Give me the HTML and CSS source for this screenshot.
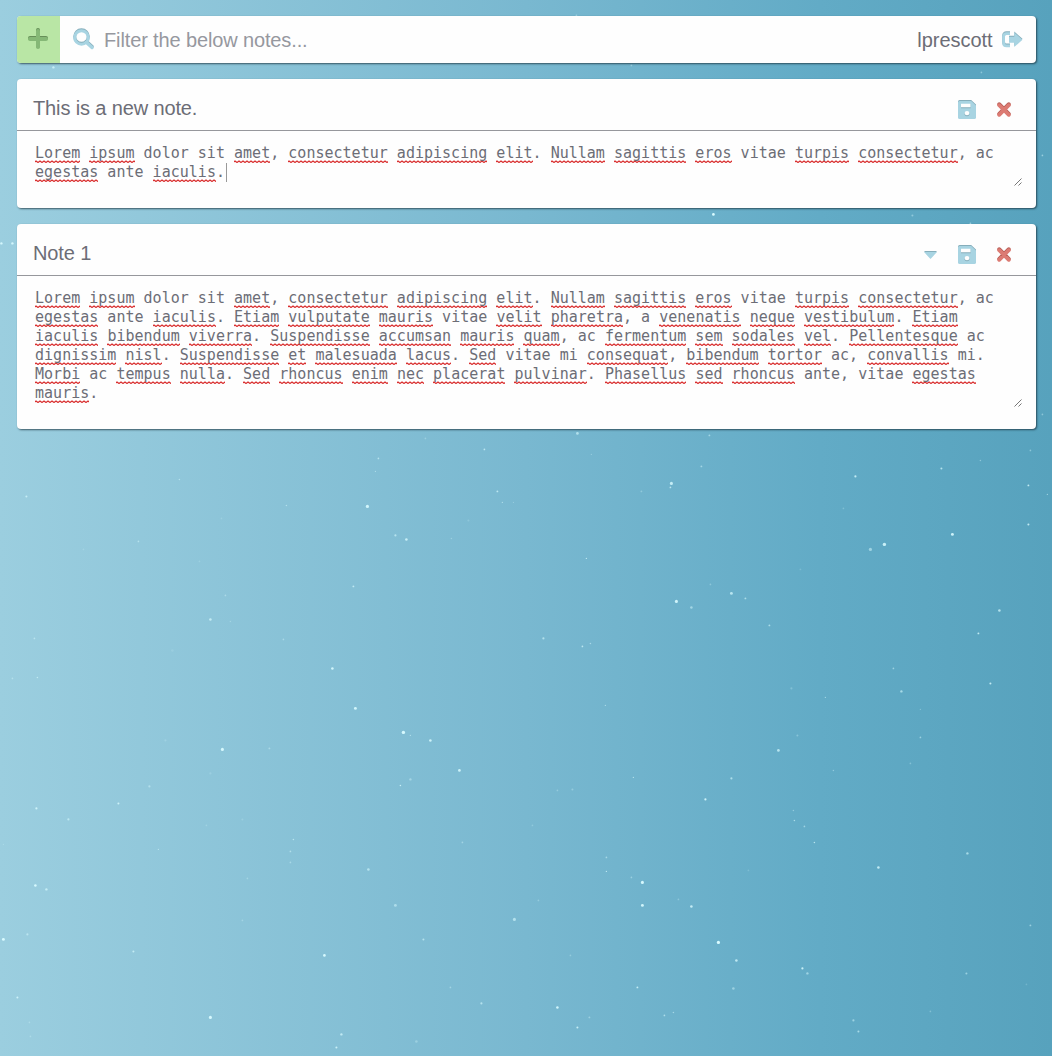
FILE: index.html
```html
<!DOCTYPE html>
<html lang="en">
<head>
<meta charset="utf-8">
<title>Notes</title>
<link rel="stylesheet" href="styles.css">
</head>
<body>
<svg class="stars" id="stars" width="1052" height="1056" aria-hidden="true"></svg>
<svg class="defs" width="0" height="0" aria-hidden="true">
  <symbol id="save" viewBox="0 0 18 18"><path fill-rule="evenodd" d="M1.6 0H13.2L18 4.6V16.4Q18 18 16.4 18H1.6Q0 18 0 16.4V1.6Q0 0 1.6 0ZM3 2.8V7.2H12.7V2.8ZM9 10A2.6 2.6 0 1 0 9 15.2A2.6 2.6 0 1 0 9 10Z"/></symbol>
  <symbol id="close" viewBox="0 0 14 14"><path d="M2.2 2.2L11.8 11.8M11.8 2.2L2.2 11.8" fill="none" stroke="currentColor" stroke-width="3.8" stroke-linecap="round"/></symbol>
</svg>
<main class="app">
  <header class="bar">
    <button class="add" aria-label="Add note"><svg width="20" height="20" viewBox="0 0 20 20"><path d="M10 2V18M2 10H18" fill="none" stroke="currentColor" stroke-width="4" stroke-linecap="round"/></svg></button>
    <svg class="search icon" width="21" height="21" viewBox="0 0 21 21"><circle cx="8.5" cy="8.5" r="6.8" fill="none" stroke="currentColor" stroke-width="3"/><path d="M13.5 13.5L19 18.5" stroke="currentColor" stroke-width="3.4" stroke-linecap="round"/></svg>
    <span class="filter">Filter the below notes...</span>
    <span class="user">lprescott</span>
    <svg class="logout icon" width="21" height="16" viewBox="0 0 21 16"><path d="M8 1.7H4.5Q1.6 1.7 1.6 4.6V11Q1.6 13.9 4.5 13.9H8" fill="none" stroke="currentColor" stroke-width="2.8"/><path d="M7 4.8H12.3V.6L20.5 7.8L12.3 15V10.8H7Z"/></svg>
  </header>

  <section class="note">
    <div class="head">
      <span class="title">This is a new note.</span>
      <svg class="icon" width="18" height="18"><use href="#save"/></svg>
      <svg class="icon close" width="14" height="14"><use href="#close"/></svg>
    </div>
    <div class="body short"><div class="text"><u>Lorem</u> <u>ipsum</u> dolor sit <u>amet</u>, <u>consectetur</u> <u>adipiscing</u> <u>elit</u>. <u>Nullam</u> <u>sagittis</u> <u>eros</u> vitae <u>turpis</u> <u>consectetur</u>, ac
<u>egestas</u> ante <u>iaculis</u>.<span class="caret"></span></div>
      <svg class="grip" width="8" height="8" viewBox="0 0 8 8"><path d="M.5 7.5L7.5 .5M4.5 7.5L7.5 4.5"/></svg>
    </div>
  </section>

  <section class="note">
    <div class="head">
      <span class="title">Note 1</span>
      <svg class="icon down" width="13" height="7" viewBox="0 0 13 7"><path d="M0 0H13L6.5 7Z"/></svg>
      <svg class="icon" width="18" height="18"><use href="#save"/></svg>
      <svg class="icon close" width="14" height="14"><use href="#close"/></svg>
    </div>
    <div class="body long"><div class="text"><u>Lorem</u> <u>ipsum</u> dolor sit <u>amet</u>, <u>consectetur</u> <u>adipiscing</u> <u>elit</u>. <u>Nullam</u> <u>sagittis</u> <u>eros</u> vitae <u>turpis</u> <u>consectetur</u>, ac
<u>egestas</u> ante <u>iaculis</u>. <u>Etiam</u> <u>vulputate</u> <u>mauris</u> vitae <u>velit</u> <u>pharetra</u>, a <u>venenatis</u> <u>neque</u> <u>vestibulum</u>. <u>Etiam</u>
<u>iaculis</u> <u>bibendum</u> <u>viverra</u>. <u>Suspendisse</u> <u>accumsan</u> <u>mauris</u> <u>quam</u>, ac <u>fermentum</u> <u>sem</u> <u>sodales</u> <u>vel</u>. <u>Pellentesque</u> ac
<u>dignissim</u> <u>nisl</u>. <u>Suspendisse</u> <u>et</u> <u>malesuada</u> <u>lacus</u>. <u>Sed</u> vitae mi <u>consequat</u>, <u>bibendum</u> <u>tortor</u> ac, <u>convallis</u> mi.
<u>Morbi</u> ac <u>tempus</u> <u>nulla</u>. <u>Sed</u> <u>rhoncus</u> <u>enim</u> <u>nec</u> <u>placerat</u> <u>pulvinar</u>. <u>Phasellus</u> <u>sed</u> <u>rhoncus</u> ante, vitae <u>egestas</u>
<u>mauris</u>.</div>
      <svg class="grip" width="8" height="8" viewBox="0 0 8 8"><path d="M.5 7.5L7.5 .5M4.5 7.5L7.5 4.5"/></svg>
    </div>
  </section>
</main>
<script src="stars.js"></script>
</body>
</html>
```
FILE: styles.css
```css
* { box-sizing: border-box; }

body {
  margin: 0;
  min-height: 1056px;
  overflow: hidden;
  font-family: "Liberation Sans", Arial, sans-serif;
  font-size: 20px;
  color: #6c6d76;
  background: linear-gradient(to right, #9bcedf 0%, #79b8d0 50%, #62abc6 78%, #57a2bd 100%);
}

.stars { position: absolute; inset: 0; }
.stars circle { fill: #d9fbff; }
.defs { position: absolute; }

.app {
  position: relative;
  display: flex;
  flex-direction: column;
  gap: 16px;
  padding: 16px 16.5px 0;
}

.bar, .note {
  background: #fefefe;
  border-radius: 4px;
  box-shadow: 1px 1px 2px rgba(20, 40, 50, .7);
}

.bar {
  display: flex;
  align-items: center;
  height: 46.5px;
  margin-bottom: .5px;
  padding-right: 13px;
}

.add {
  width: 43.5px;
  height: 46.5px;
  padding: 0;
  border: 0;
  border-radius: 4px 0 0 4px;
  background: #b9e6a5;
  color: #85b876;
  display: grid;
  place-items: center;
}

.icon { fill: currentColor; color: #a8d4e2; filter: drop-shadow(0 -.5px 0 #86aebb); }
.add svg { filter: drop-shadow(0 -.5px 0 #668f58); }
.search { margin: 1px 0 0 13px; }
.filter { flex: 1; margin-left: 10px; padding-top: 2px; color: #96989f; letter-spacing: -.13px; }
.user { padding-top: 2px; margin-right: 9px; letter-spacing: -.05px; }
.logout { margin-top: 1px; }

.head {
  display: flex;
  align-items: center;
  height: 52px;
  padding: 11px 24.5px 0 16.5px;
  border-bottom: 1px solid #96979c;
}

.title { flex: 1; padding-bottom: 4px; letter-spacing: -.13px; }
.down { margin-right: 20.5px; }
.close { margin-left: 21.5px; color: #dc7b73; filter: drop-shadow(0 -.5px 0 #b55b54); }

.body {
  display: flex;
  align-items: flex-end;
  justify-content: space-between;
  padding: 13px 13.5px 21.5px 18.5px;
}

.short { height: 76.5px; margin-bottom: .5px; }
.long { height: 152.5px; }

.text {
  align-self: flex-start;
  white-space: pre;
  font: 15px/19px "DejaVu Sans Mono", "Liberation Mono", monospace;
  letter-spacing: .014px;
}

.text u {
  text-decoration: none;
  padding-bottom: 1px;
  background: url("data:image/svg+xml,%3Csvg xmlns='http://www.w3.org/2000/svg' width='4' height='3'%3E%3Cpath d='M-1 2.5L1 1L3 2.5L5 1' fill='none' stroke='%23d92f2f' stroke-width='1.25'/%3E%3C/svg%3E") 0 100% repeat-x;
}

.caret { display: inline-block; width: 1px; height: 19px; margin-left: 1px; vertical-align: top; background: #999; }
.grip { stroke: #777; stroke-width: 1; fill: none; flex: none; }
```
FILE: stars.js
```js
// Each star is x, y, radius, opacity.
const stars = [
  [53,67,1.4,.7],[713,214,1.6,1],[1,243,1.4,.9],[12,243,1.4,.9],[576,15,1,.4],[631,65,1,.4],[981,72,1,.4],[1042,155,1,.5],[912,215,1.2,.4],[970,223,1,.5],[1042,414,1,.4],
  [26,496,1.2,.7],[179,479,.9,.5],[286,505,.9,.5],[138,541,1,.5],[83,549,1,.2],[221,518,1,.2],[199,561,1,.2],[225,595,1,.4],[210,619,1.5,.7],[230,621,.9,.3],[34,638,1,.5],[283,639,1,.4],[332,668,1.5,.9],[172,650,1.5,.15],[12,678,1,.4],[37,677,.9,.6],[165,740,1.3,.2],
  [425,438,1,.3],[577,433,1.6,.6],[484,449,1,.7],[378,458,1,.6],[375,471,.7,.5],[591,454,.8,.3],[367,506,1.9,.9],[395,535,1.3,.6],[406,539,1.5,.8],[497,491,1.1,.7],[502,502,.8,.5],[513,502,.7,.3],[468,520,1.2,.2],[451,538,.9,.3],[586,558,.8,.7],[671,483,1.8,.8],[670,487,1,.7],[641,491,1.1,.3],[353,586,1.1,.7],[676,601,1.8,.9],[691,607,1.5,.5],[543,638,1.3,.6],[582,646,1,.7],[590,643,.9,.5],[605,705,.8,.5],[355,708,1.7,.9],[403,732,2,.95],[410,735,.8,.5],[430,740,1.5,.85],
  [709,435,1.1,.5],[701,466,1.1,.5],[855,476,1.3,.8],[941,468,1.2,.7],[980,460,.9,.4],[1030,450,1,.4],[1028,485,1.1,.8],[1047,494,.8,.5],[1028,524,1.2,.8],[843,508,1,.25],[884,544,2,.85],[870,549,1.9,.5],[952,534,1.7,.9],[800,569,1.1,.2],[710,584,1,.3],[731,593,1.7,.7],[745,598,1.1,.6],[769,625,1.1,.6],[999,610,1.5,.7],[978,633,1.1,.8],[893,668,1,.5],[901,691,1.4,.6],[990,683,1.2,.8],[791,688,1.3,.25],[825,697,.8,.5],[920,709,.8,.3],[797,735,1.2,.3],[920,737,1,.5],
  [222,749,1.8,.95],[269,748,1.1,.4],[210,773,1.3,.2],[149,786,1.3,.45],[118,803,1.2,.8],[36,808,1.3,.8],[68,819,1.3,.6],[206,825,1,.25],[242,819,1.2,.2],[293,839,.9,.6],[290,851,1,.5],[290,862,1,.4],[158,849,.8,.5],[35,885,1.5,.95],[46,889,1.4,.7],[247,878,1,.3],[242,920,1,.3],[3,939,1.7,1],[27,934,1.3,.5],[133,951,1.2,.7],[324,955,1.6,.95],[17,997,1.2,.8],[29,1022,1,.3],[30,1036,1,.3],[210,1017,1.8,.95],[341,1034,1.4,.7],[336,1047,1.2,.8],[3,844,.8,.25],
  [459,770,1.6,.85],[410,779,1.4,.4],[400,785,.9,.8],[557,790,1,.3],[572,789,1.2,.3],[633,777,.8,.6],[532,825,1,.25],[462,842,1,.4],[606,857,1,.5],[606,871,.8,.7],[368,869,1.5,.6],[631,877,1,.4],[642,882,1.8,.95],[395,905,1.7,.5],[642,905,1.7,.9],[691,906,1.5,.8],[678,899,1,.3],[538,900,1,.3],[514,919,1.8,.6],[423,939,1.2,.6],[570,955,1,.3],[450,987,1,.4],[481,1003,1.3,.6],[557,1007,1.5,.9],[637,987,1.1,.8],[577,1027,1.2,.8],[589,1017,1.1,.4],[664,1015,1,.6],[673,1012,.9,.5],[416,1041,1.5,.3],
  [778,750,1.6,.7],[731,778,1.3,.6],[705,799,1.3,.9],[833,770,.9,.4],[910,763,1,.3],[793,810,.9,.4],[794,820,.9,.6],[804,826,1,.5],[814,842,.9,.7],[878,867,1.5,.8],[967,853,1.4,.6],[748,870,1,.2],[1030,925,1.1,.5],[718,942,1.9,1],[736,960,1.5,.75],[802,968,1.3,.85],[807,973,1.4,.5],[733,988,1.5,.45],[966,973,1.2,.5],[853,1020,1.3,.5],[858,1031,1.2,.6],[930,1011,1,.3],[1026,984,1,.2]
];
const sky = document.getElementById("stars");
for (const [x, y, r, opacity] of stars) {
  const star = document.createElementNS("http://www.w3.org/2000/svg", "circle");
  for (const [name, value] of Object.entries({ cx: x + .4, cy: y + .4, r: r * .85, opacity })) star.setAttribute(name, value);
  sky.append(star);
}
```
